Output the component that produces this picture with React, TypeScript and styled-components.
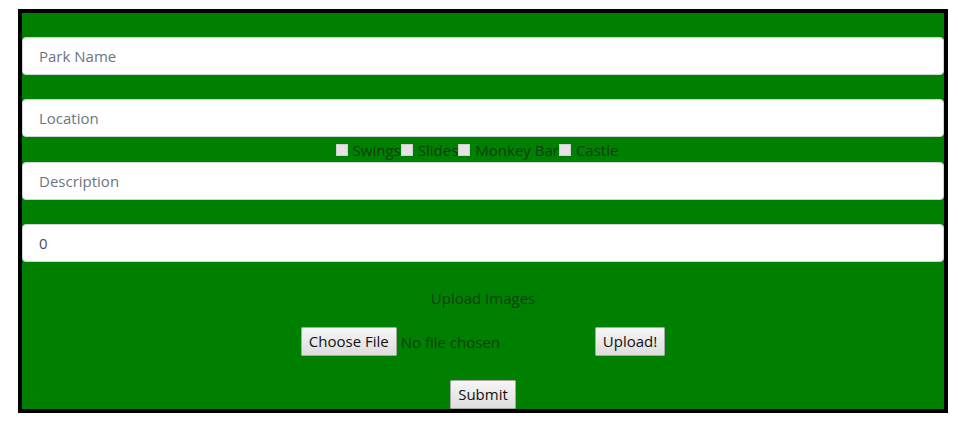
import React from "react";
import styled, { createGlobalStyle } from "styled-components";

const Global = createGlobalStyle`
  html, body { margin: 0; padding: 0; background: #fff; }
  body { font-family: "Open Sans", "Noto Sans", sans-serif; font-size: 16px; }
  * { box-sizing: border-box; }
`;

const Form = styled.form`
  width: 930px;
  margin: 9px 0 0 18px;
  height: 404px;
  border: 4px solid #000;
  background: #008000;
  padding-top: 24px;
  display: flex;
  flex-direction: column;
  overflow: hidden;
`;

const TextInput = styled.input<{ $gap?: number }>`
  display: block;
  width: 100%;
  height: 38px;
  margin: 0 0 ${(p) => p.$gap ?? 0}px 0;
  padding: 0 16px;
  border: 1px solid #ced4da;
  border-radius: 4px;
  background: #fff;
  color: #495057;
  font-family: inherit;
  font-size: 15px;
  outline: none;
  &::placeholder { color: #6c757d; opacity: 1; }
`;

const CheckRow = styled.div`
  height: 25px;
  display: flex;
  justify-content: center;
  align-items: center;
  padding-right: 12px;
  color: #0f3d0f;
  font-size: 15px;
`;

const CheckLabel = styled.label`
  display: inline-flex;
  align-items: center;
  white-space: pre;
`;

const Box = styled.span`
  display: inline-block;
  width: 12px;
  height: 12px;
  background: #e4e4e4;
  border: 1px solid #cfcfcf;
  margin-right: 5px;
`;

const UploadTitle = styled.div`
  margin-top: 24px;
  height: 24px;
  line-height: 24px;
  text-align: center;
  color: #0f3d0f;
  font-size: 15px;
`;

const UploadRow = styled.div`
  margin-top: 17px;
  display: flex;
  justify-content: center;
  align-items: center;
`;

const FileField = styled.div`
  width: 294px;
  display: flex;
  align-items: center;
`;

const FileStatus = styled.span`
  margin-left: 4px;
  color: #0f3d0f;
  font-size: 15px;
`;

const Button = styled.button`
  height: 29px;
  padding: 0 7px;
  border: 1px solid #a6a6a6;
  border-radius: 1px;
  background: linear-gradient(#f6f6f6, #dddddd);
  color: #111;
  font-family: inherit;
  font-size: 15px;
  line-height: 27px;
  cursor: pointer;
`;

const SubmitWrap = styled.div`
  margin-top: 24px;
  display: flex;
  justify-content: center;
`;

export default function App() {
  const features = ["Swings", "Slides", "Monkey Bar", "Castle"];
  return (
    <>
      <Global />
      <Form onSubmit={(e) => e.preventDefault()}>
        <TextInput placeholder="Park Name" $gap={24} />
        <TextInput placeholder="Location" />
        <CheckRow>
          {features.map((f) => (
            <CheckLabel key={f}>
              <Box />
              {f}
            </CheckLabel>
          ))}
        </CheckRow>
        <TextInput placeholder="Description" $gap={24} />
        <TextInput defaultValue="0" />
        <UploadTitle>Upload Images</UploadTitle>
        <UploadRow>
          <FileField>
            <Button type="button">Choose File</Button>
            <FileStatus>No file chosen</FileStatus>
          </FileField>
          <Button type="button">Upload!</Button>
        </UploadRow>
        <SubmitWrap>
          <Button type="submit">Submit</Button>
        </SubmitWrap>
      </Form>
    </>
  );
}
